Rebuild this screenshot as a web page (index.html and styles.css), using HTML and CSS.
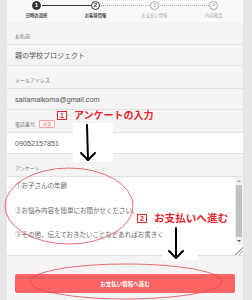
FILE: index.html
```html
<!DOCTYPE html>
<html lang="ja">
<head>
  <meta charset="UTF-8">
  <meta name="viewport" content="width=device-width, initial-scale=1.0">
  <title>お客様情報</title>
  <link rel="stylesheet" href="styles.css">
</head>
<body>
  <div class="screen">
    <div class="page">
      <ol class="steps">
        <li class="step done"><span class="dot">1</span><span class="step-name">日時の選択</span></li>
        <li class="step current"><span class="dot">2</span><span class="step-name">お客様情報</span></li>
        <li class="step"><span class="dot">3</span><span class="step-name">お支払い情報</span></li>
        <li class="step"><span class="dot">4</span><span class="step-name">内容確認</span></li>
      </ol>

      <form class="form">
        <div class="label-row"><label for="name">お名前</label></div>
        <input class="field locked" id="name" type="text" value="親の学校プロジェクト" readonly>

        <div class="label-row"><label for="mail">メールアドレス</label></div>
        <input class="field locked" id="mail" type="email" value="saitamaikoma@gmail.com" readonly>

        <div class="label-row"><label for="tel">電話番号</label><span class="required">必須</span></div>
        <input class="field" id="tel" type="tel" value="09052157851">

        <div class="label-row"><label for="memo">アンケート</label></div>
        <div class="memo-box">
          <textarea class="memo" id="memo">①お子さんの年齢

②お悩み内容を簡単にお聞かせください。

③その他、伝えておきたいことなどあればお書きください。</textarea>
          <div class="scrollbar">
            <span class="scroll-btn up"></span>
            <span class="scroll-thumb"></span>
            <span class="scroll-btn down"></span>
            <span class="grip"></span>
          </div>
        </div>

        <button class="submit" type="button">お支払い情報へ進む</button>
      </form>
    </div>

    <!-- 説明用の書き込み -->
    <div class="notes">
      <svg class="marks" width="252" height="300" viewBox="0 0 252 300">
        <rect x="73" y="123" width="40" height="39" fill="#fff"/>
        <rect x="162" y="226" width="36" height="34" fill="#fff"/>
        <ellipse cx="69" cy="206" rx="64" ry="38" fill="none" stroke="#e8474f" stroke-width="0.8"/>
        <ellipse cx="126" cy="281.5" rx="96" ry="17.5" fill="none" stroke="#e8474f" stroke-width="0.8"/>
        <g fill="none" stroke="#000" stroke-width="2" stroke-linecap="round" stroke-linejoin="round">
          <path d="M87 125 L88 160"/>
          <path d="M81 153 L88 160 L95 153"/>
          <path d="M176 228 L176 258"/>
          <path d="M169 251 L176 258 L183 251"/>
        </g>
      </svg>
      <div class="note note-one"><span class="num">1</span>アンケートの入力</div>
      <div class="note note-two"><span class="num">2</span>お支払いへ進む</div>
    </div>
  </div>
</body>
</html>
```

FILE: styles.css
```css
body {
  margin: 0;
  background: #e6e6e6;
  font-family: "Noto Sans CJK JP", "Noto Sans", sans-serif;
  color: #555;
}
.screen {
  position: relative;
  width: 252px;
  height: 300px;
  overflow: hidden;
}
.page {
  width: 236px;
  height: 300px;
  margin: 0 7px;
  background: #f4f4f4;
}

/* ステップ表示 */
.steps {
  list-style: none;
  margin: 0;
  padding: 1px 0 0;
  height: 21px;
  display: grid;
  grid-template-columns: repeat(4, 1fr);
  background: #f9f9f9;
}
.step {
  position: relative;
  display: flex;
  flex-direction: column;
  align-items: center;
  color: #aaa;
}
.step + .step::before {
  content: "";
  position: absolute;
  top: 4px;
  right: calc(50% + 5px);
  width: calc(100% - 10px);
  border-top: 1px dotted #aaa;
}
.step.current::before {
  border-top: 1px solid #333;
}
.dot {
  box-sizing: border-box;
  width: 9px;
  height: 9px;
  border: 1px solid #aaa;
  border-radius: 50%;
  background: #fff;
  font-size: 6px;
  line-height: 7px;
  text-align: center;
  font-family: "Liberation Sans", sans-serif;
}
.done .dot {
  background: #333;
  border-color: #333;
  color: #fff;
  font-weight: bold;
}
.current .dot {
  border-color: #333;
  color: #333;
  font-weight: bold;
}
.step-name {
  margin-top: 3px;
  font-size: 4.3px;
  line-height: 5px;
}
.done .step-name,
.current .step-name {
  color: #444;
  font-weight: bold;
}

/* フォーム */
.form {
  display: flex;
  flex-direction: column;
}
.label-row {
  height: 22px;
  box-sizing: border-box;
  padding: 6px 8px 0;
  display: flex;
  align-items: center;
  gap: 4px;
}
.label-row label {
  font-size: 5px;
  line-height: 8px;
  color: #777;
}
.required {
  font-size: 4px;
  line-height: 6px;
  padding: 0 3px;
  color: #f06a6a;
  border: 1px solid #f3a0a0;
  border-radius: 1px;
  background: #fff;
}
.field {
  box-sizing: border-box;
  height: 22px;
  width: 100%;
  margin: 0;
  padding: 0 8px;
  border: none;
  border-top: 1px solid #e2e2e2;
  border-bottom: 1px solid #e2e2e2;
  background: #fff;
  font-family: "Noto Sans CJK JP", "Noto Sans", sans-serif;
  font-size: 7px;
  color: #555;
  outline: none;
}
.field.locked {
  background: #f4f4f4;
}
#mail, #tel {
  font-family: "Liberation Sans", sans-serif;
  font-size: 7.2px;
}
.memo-box {
  display: flex;
  height: 80px;
  box-sizing: border-box;
  border-top: 1px solid #e2e2e2;
  border-bottom: 1px solid #e2e2e2;
  background: #fff;
}
.memo {
  flex: 1;
  border: none;
  margin: 0;
  padding: 2px 8px;
  resize: none;
  overflow: hidden;
  font-family: "Noto Sans CJK JP", "Noto Sans", sans-serif;
  font-size: 6.5px;
  line-height: 12.3px;
  color: #666;
  background: #fff;
  outline: none;
}
.scrollbar {
  width: 8px;
  display: flex;
  flex-direction: column;
  background: #f1f1f1;
}
.scroll-btn {
  height: 8px;
  display: flex;
  align-items: center;
  justify-content: center;
}
.scroll-btn::after {
  content: "";
  border-left: 2px solid transparent;
  border-right: 2px solid transparent;
}
.scroll-btn.up::after {
  border-bottom: 2px solid #a3a3a3;
}
.scroll-btn.down::after {
  border-top: 2px solid #505050;
}
.scroll-thumb {
  height: 52px;
  margin: 0 1px;
  background: #c1c1c1;
}
.grip {
  flex: 1;
  background:
    linear-gradient(135deg, transparent 55%, #aaa 55%, #aaa 62%, transparent 62%, transparent 75%, #aaa 75%, #aaa 82%, transparent 82%);
  background-color: #fff;
}
.submit {
  margin: 18px 8px 0;
  height: 19px;
  border: none;
  border-radius: 2px;
  background: #ff6464;
  color: #fff;
  font-family: "Noto Sans CJK JP", "Noto Sans", sans-serif;
  font-size: 5.5px;
  font-weight: bold;
  cursor: pointer;
}

/* 書き込み */
.notes {
  position: absolute;
  left: 0;
  top: 0;
  width: 252px;
  height: 300px;
  pointer-events: none;
}
.marks {
  display: block;
}
.note {
  position: absolute;
  display: flex;
  align-items: center;
  gap: 7px;
  color: #e8262e;
  font-size: 10px;
  line-height: 12px;
  font-weight: bold;
  white-space: nowrap;
}
.note-one {
  left: 57px;
  top: 109px;
}
.note-two {
  left: 137px;
  top: 212px;
  font-size: 10.6px;
}
.num {
  box-sizing: border-box;
  width: 10px;
  height: 9px;
  border: 1px solid #e8262e;
  background: #fff;
  font-family: "Liberation Sans", sans-serif;
  font-size: 7px;
  line-height: 7px;
  text-align: center;
}
```
